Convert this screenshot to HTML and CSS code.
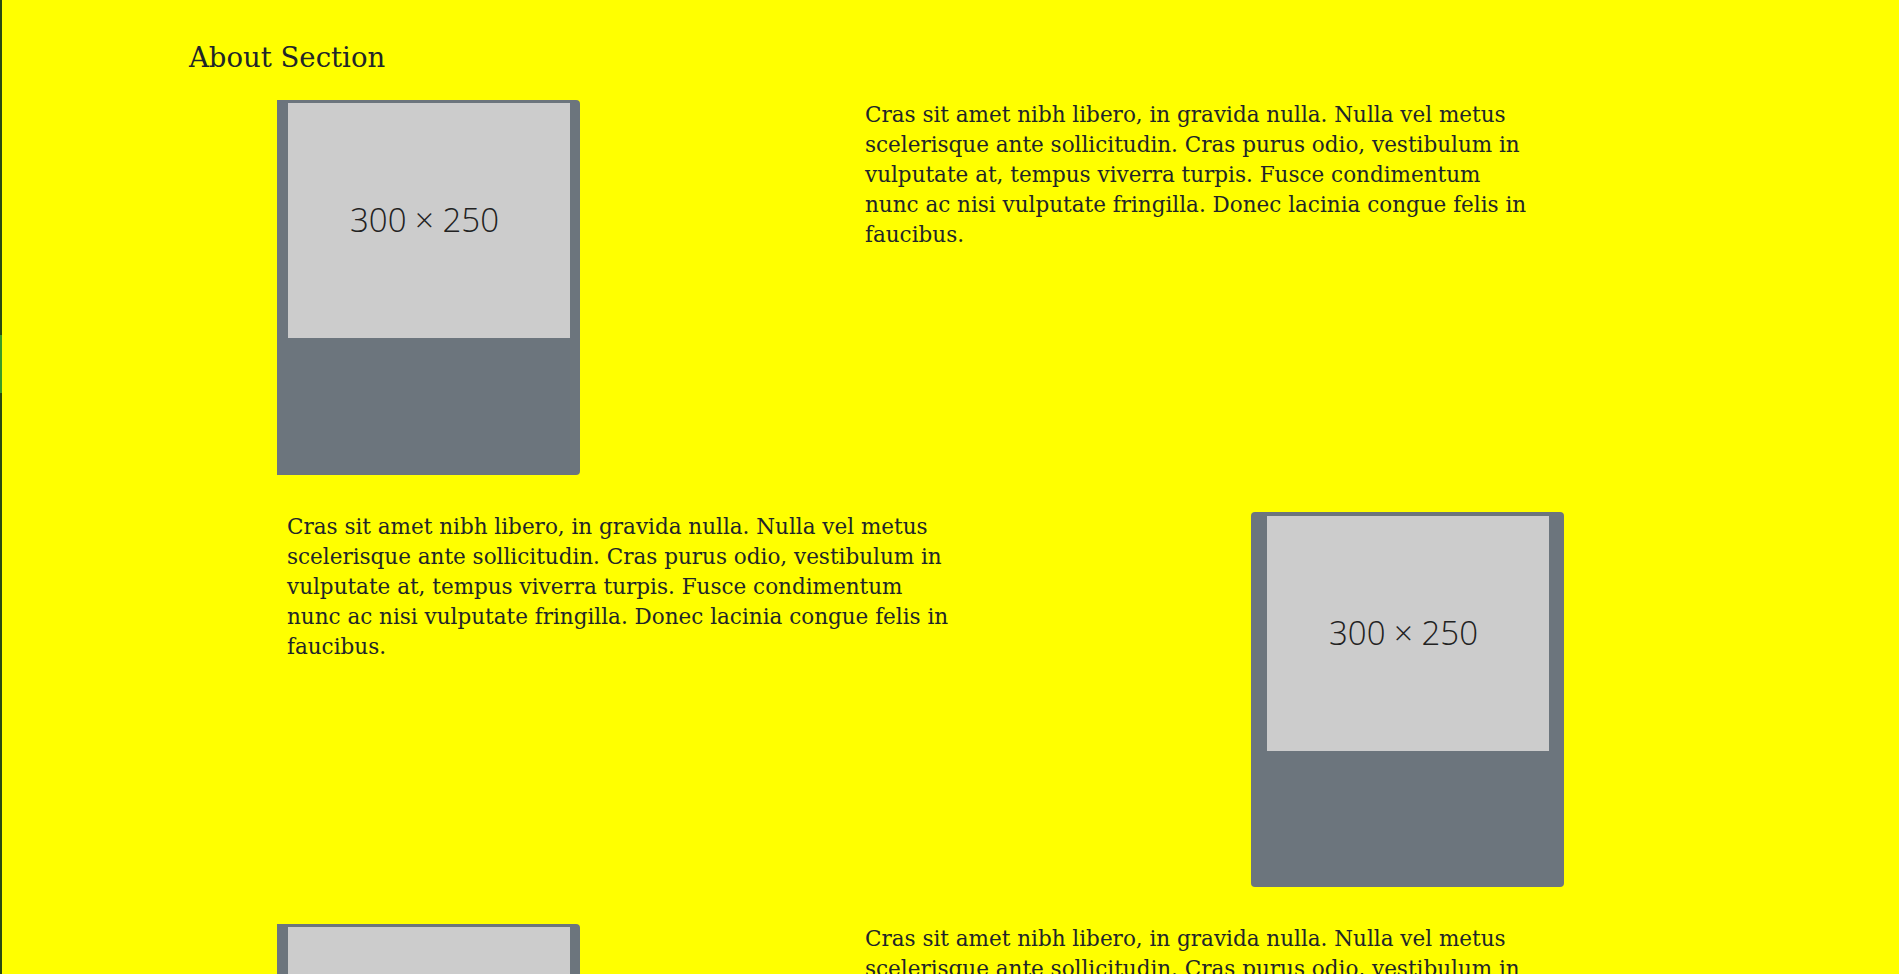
FILE: index.html
```html
<!DOCTYPE html>
<html lang="en">
<head>
<meta charset="utf-8">
<title>About Section</title>
<link rel="stylesheet" href="styles.css">
</head>
<body>
<div class="page">
  <span class="edge-mark"></span>
  <h2 class="heading">About Section</h2>

  <div class="row row-a">
    <div class="card card-a">
      <div class="placeholder"><span>300 × 250</span></div>
    </div>
    <p class="text">Cras sit amet nibh libero, in gravida nulla. Nulla vel metus scelerisque ante sollicitudin. Cras purus odio, vestibulum in vulputate at, tempus viverra turpis. Fusce condimentum nunc ac nisi vulputate fringilla. Donec lacinia congue felis in faucibus.</p>
  </div>

  <div class="row row-b">
    <p class="text">Cras sit amet nibh libero, in gravida nulla. Nulla vel metus scelerisque ante sollicitudin. Cras purus odio, vestibulum in vulputate at, tempus viverra turpis. Fusce condimentum nunc ac nisi vulputate fringilla. Donec lacinia congue felis in faucibus.</p>
    <div class="card card-b">
      <div class="placeholder"><span>300 × 250</span></div>
    </div>
  </div>

  <div class="row row-a">
    <div class="card card-a">
      <div class="placeholder"><span>300 × 250</span></div>
    </div>
    <p class="text">Cras sit amet nibh libero, in gravida nulla. Nulla vel metus scelerisque ante sollicitudin. Cras purus odio, vestibulum in vulputate at, tempus viverra turpis. Fusce condimentum nunc ac nisi vulputate fringilla. Donec lacinia congue felis in faucibus.</p>
  </div>
</div>
</body>
</html>
```

FILE: styles.css
```css
html, body {
  margin: 0;
  padding: 0;
}

body {
  background: #ffff00;
  color: #212529;
  font-family: "DejaVu Serif", "Liberation Serif", serif;
}

.page {
  position: relative;
  border-left: 2px solid #2a4a10;
  min-height: 100vh;
  padding-top: 41px;
  box-sizing: border-box;
}

.edge-mark {
  position: absolute;
  left: -2px;
  top: 335px;
  width: 2px;
  height: 58px;
  background: #3a9c26;
}

.heading {
  margin: 0 0 26px 0;
  padding-left: 187px;
  font-size: 27.5px;
  line-height: 33px;
  font-weight: normal;
}

.row {
  display: flex;
  align-items: flex-start;
  margin-bottom: 37px;
}

.row-a {
  padding-left: 275px;
}

.row-b {
  padding-left: 285px;
}

.text {
  margin: 0;
  width: 668px;
  font-size: 21.5px;
  line-height: 30px;
}

.row-a .text {
  margin-left: 285px;
}

.card {
  flex: none;
  height: 375px;
  background: #6c757d;
  display: flex;
  justify-content: center;
  align-items: flex-start;
  box-sizing: border-box;
}

.card-a {
  width: 303px;
  padding-top: 3px;
  border-radius: 0 4px 4px 0;
}

.card-b {
  width: 313px;
  margin-left: 296px;
  padding-top: 4px;
  border-radius: 4px;
}

.placeholder {
  width: 282px;
  height: 235px;
  background: #cccccc;
  display: flex;
  align-items: center;
  justify-content: center;
}

.placeholder span {
  font-family: "Open Sans", "Noto Sans", sans-serif;
  font-size: 33px;
  font-weight: 300;
  color: #222222;
  margin-right: 8px;
  margin-top: -2px;
}
```
